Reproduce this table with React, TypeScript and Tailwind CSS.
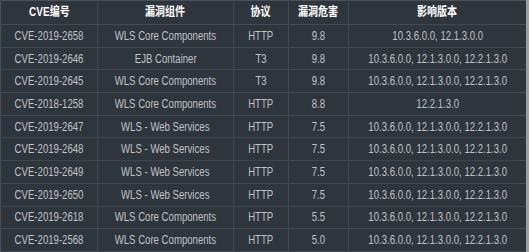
import React from "react";

const rows: [string, string, string, string, string][] = [
  ["CVE-2019-2658", "WLS Core Components", "HTTP", "9.8", "10.3.6.0.0, 12.1.3.0.0"],
  ["CVE-2019-2646", "EJB Container", "T3", "9.8", "10.3.6.0.0, 12.1.3.0.0, 12.2.1.3.0"],
  ["CVE-2019-2645", "WLS Core Components", "T3", "9.8", "10.3.6.0.0, 12.1.3.0.0, 12.2.1.3.0"],
  ["CVE-2018-1258", "WLS Core Components", "HTTP", "8.8", "12.2.1.3.0"],
  ["CVE-2019-2647", "WLS - Web Services", "HTTP", "7.5", "10.3.6.0.0, 12.1.3.0.0, 12.2.1.3.0"],
  ["CVE-2019-2648", "WLS - Web Services", "HTTP", "7.5", "10.3.6.0.0, 12.1.3.0.0, 12.2.1.3.0"],
  ["CVE-2019-2649", "WLS - Web Services", "HTTP", "7.5", "10.3.6.0.0, 12.1.3.0.0, 12.2.1.3.0"],
  ["CVE-2019-2650", "WLS - Web Services", "HTTP", "7.5", "10.3.6.0.0, 12.1.3.0.0, 12.2.1.3.0"],
  ["CVE-2019-2618", "WLS Core Components", "HTTP", "5.5", "10.3.6.0.0, 12.1.3.0.0, 12.2.1.3.0"],
  ["CVE-2019-2568", "WLS Core Components", "HTTP", "5.0", "10.3.6.0.0, 12.1.3.0.0, 12.2.1.3.0"],
];

const widths = ["w-[97px]", "w-[136px]", "w-[55px]", "w-[60px]", "w-[177px]"];

function Cell({ i, children, head }: { i: number; children: React.ReactNode; head?: boolean }) {
  return (
    <div
      className={`${widths[i]} shrink-0 flex items-center justify-center ${i < 4 ? "border-r border-[#40464e]" : ""}`}
    >
      <span
        className={`inline-block whitespace-nowrap scale-x-[0.8] ${
          head ? "text-white font-bold text-[12.5px]" : "text-[#c0c2c5] text-[12px]"
        }`}
      >
        {children}
      </span>
    </div>
  );
}

export default function App() {
  const heads = ["CVE编号", "漏洞组件", "协议", "漏洞危害", "影响版本"];
  return (
    <div
      className="w-[529px] h-[252px] overflow-hidden bg-[#9a9da1]"
      style={{ fontFamily: '"Liberation Sans", Arial, "Noto Sans CJK SC", sans-serif' }}
    >
      <div className="w-[526px] h-[252px] bg-[#2f353d] border-t border-l border-[#4a5058] flex flex-col">
        <div className="flex h-[24px] border-b border-[#454b53]">
          {heads.map((h, i) => (
            <Cell key={i} i={i} head>
              {h}
            </Cell>
          ))}
        </div>
        {rows.map((r, ri) => (
          <div key={ri} className="flex h-[22.7px] border-b border-[#40464e] shrink-0">
            {r.map((c, i) => (
              <Cell key={i} i={i}>
                {c}
              </Cell>
            ))}
          </div>
        ))}
      </div>
    </div>
  );
}
